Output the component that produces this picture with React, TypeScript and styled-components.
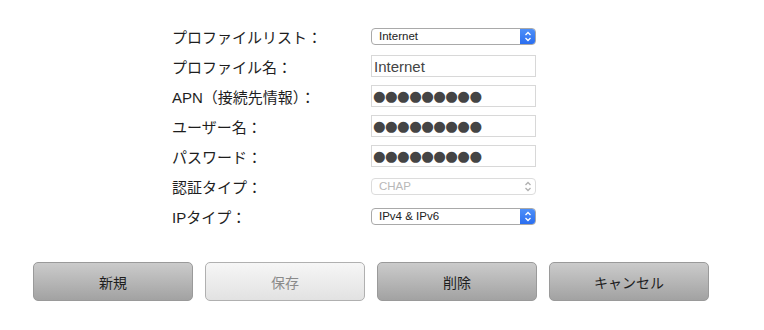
import React from "react";
import styled, { createGlobalStyle } from "styled-components";

const Global = createGlobalStyle`
  html, body { margin: 0; padding: 0; background: #fff; }
  body { font-family: "Liberation Sans", "Noto Sans CJK JP", sans-serif; }
`;

const Page = styled.div`
  width: 764px;
  height: 330px;
  padding-top: 21px;
  box-sizing: border-box;
`;

const Form = styled.div`
  display: flex;
  flex-direction: column;
  padding-left: 172px;
`;

const Row = styled.div`
  display: grid;
  grid-template-columns: 199px 165px;
  height: 30px;
  align-items: center;
`;

const Label = styled.div`
  font-size: 15px;
  color: #1e1e1e;
  white-space: nowrap;
`;

const TextBox = styled.div<{ $dots?: boolean }>`
  height: 22px;
  box-sizing: border-box;
  border: 1px solid #d8d8d8;
  background: #fff;
  display: flex;
  align-items: center;
  padding-left: ${(p) => (p.$dots ? "1px" : "2px")};
  font-size: ${(p) => (p.$dots ? "14.5px" : "15px")};
  color: #444;
  letter-spacing: ${(p) => (p.$dots ? "-0.6px" : "0")};
  font-family: ${(p) => (p.$dots ? '"DejaVu Sans", sans-serif' : '"Liberation Sans", sans-serif')};
`;

const SelectBox = styled.div<{ $disabled?: boolean }>`
  height: 17px;
  box-sizing: border-box;
  border: 1px solid ${(p) => (p.$disabled ? "#dcdcdc" : "#a9a9a9")};
  border-radius: 4px;
  background: #fff;
  display: flex;
  align-items: center;
  justify-content: space-between;
  font-size: 11.5px;
  color: ${(p) => (p.$disabled ? "#b8b8b8" : "#222")};
  padding-left: 7px;
  overflow: hidden;
`;

const Stepper = styled.div<{ $disabled?: boolean }>`
  width: 15px;
  height: 100%;
  background: ${(p) =>
    p.$disabled ? "transparent" : "linear-gradient(#4d8ff8, #2a6ef0)"};
  display: flex;
  align-items: center;
  justify-content: center;
`;

const Chevrons = ({ color }: { color: string }) => (
  <svg width="8" height="11" viewBox="0 0 8 11">
    <path d="M1.5 4 L4 1.5 L6.5 4" fill="none" stroke={color} strokeWidth="1.3" />
    <path d="M1.5 7 L4 9.5 L6.5 7" fill="none" stroke={color} strokeWidth="1.3" />
  </svg>
);

const ButtonBar = styled.div`
  display: flex;
  gap: 12px;
  padding-left: 33px;
  margin-top: 31px;
`;

const Button = styled.button<{ $disabled?: boolean }>`
  width: 160px;
  height: 39px;
  border-radius: 5px;
  border: 1px solid ${(p) => (p.$disabled ? "#b0b0b0" : "#9a9a9a")};
  background: ${(p) =>
    p.$disabled
      ? "linear-gradient(#f6f6f6, #e2e2e2)"
      : "linear-gradient(#cbcbcb, #a2a2a2)"};
  color: ${(p) => (p.$disabled ? "#8a8a8a" : "#1e1e1e")};
  font-family: "Liberation Sans", "Noto Sans CJK JP", sans-serif;
  font-size: 14px;
  padding: 0;
  cursor: default;
`;

const Select = ({ value, disabled }: { value: string; disabled?: boolean }) => (
  <SelectBox $disabled={disabled}>
    <span>{value}</span>
    <Stepper $disabled={disabled}>
      <Chevrons color={disabled ? "#b0b0b0" : "#fff"} />
    </Stepper>
  </SelectBox>
);

const DOTS = "●●●●●●●●●";

export default function App() {
  return (
    <Page>
      <Global />
      <Form>
        <Row>
          <Label>プロファイルリスト：</Label>
          <Select value="Internet" />
        </Row>
        <Row>
          <Label>プロファイル名：</Label>
          <TextBox>Internet</TextBox>
        </Row>
        <Row>
          <Label>APN（接続先情報）：</Label>
          <TextBox $dots>{DOTS}</TextBox>
        </Row>
        <Row>
          <Label>ユーザー名：</Label>
          <TextBox $dots>{DOTS}</TextBox>
        </Row>
        <Row>
          <Label>パスワード：</Label>
          <TextBox $dots>{DOTS}</TextBox>
        </Row>
        <Row>
          <Label>認証タイプ：</Label>
          <Select value="CHAP" disabled />
        </Row>
        <Row>
          <Label>IPタイプ：</Label>
          <Select value="IPv4 &amp; IPv6" />
        </Row>
      </Form>
      <ButtonBar>
        <Button>新規</Button>
        <Button $disabled>保存</Button>
        <Button>削除</Button>
        <Button>キャンセル</Button>
      </ButtonBar>
    </Page>
  );
}
